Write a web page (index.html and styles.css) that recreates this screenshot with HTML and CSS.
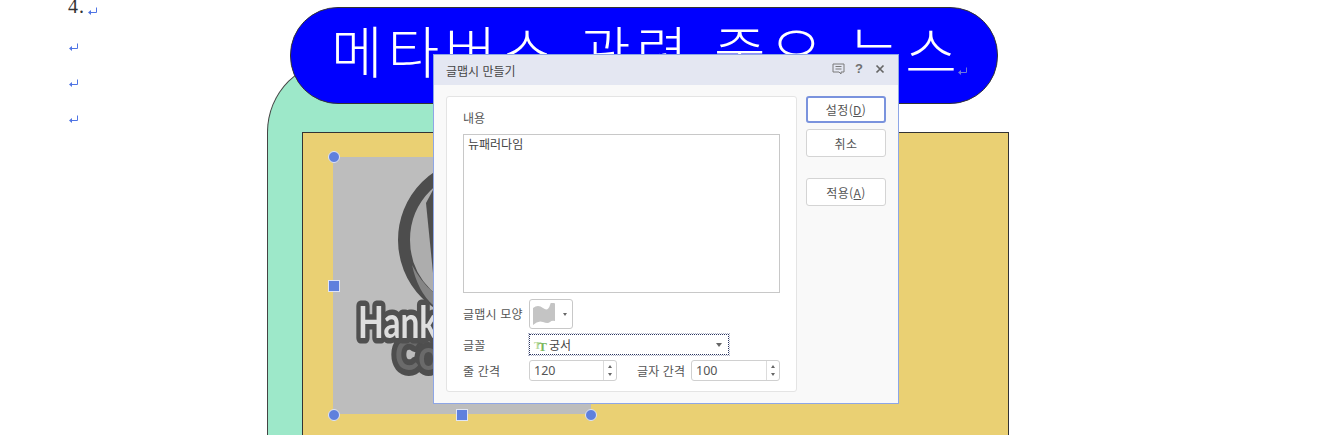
FILE: index.html
```html
<!DOCTYPE html>
<html lang="ko">
<head>
<meta charset="utf-8">
<title>글맵시 만들기</title>
<link rel="stylesheet" href="styles.css">
</head>
<body>
<svg width="0" height="0" class="defs"><symbol id="pm" viewBox="0 0 10 9"><path d="M8.5 .5V5.5H2" fill="none" stroke="currentColor"/><path d="M0 5.5L3 3V8Z" fill="currentColor"/></symbol></svg>
<main class="doc">
  <div class="para first"><span class="num">4.</span><svg class="mark"><use href="#pm"/></svg></div>
  <div class="para"><svg class="mark"><use href="#pm"/></svg></div>
  <div class="para"><svg class="mark"><use href="#pm"/></svg></div>
  <div class="para"><svg class="mark"><use href="#pm"/></svg></div>
</main>

<div class="green"></div>
<div class="yellow"></div>
<div class="picture">
  <svg class="logo" width="258" height="257" viewBox="0 0 258 257">
    <circle cx="147" cy="83" r="76" fill="#adadad" stroke="#4d4d4d" stroke-width="12"/>
    <path d="M79 108Q85 135 100 148V135Q88 125 79 108Z" fill="#858585"/>
    <path d="M93 46L100 116V33Z" fill="#4d4d4d"/>
    <text transform="translate(62 213) scale(.85 1)" class="co">Co</text>
    <text transform="translate(25 181) scale(.78 1)" class="hank">Hank</text>
  </svg>
</div>
<span class="handle round h-tl"></span>
<span class="handle square h-ml"></span>
<span class="handle round h-bl"></span>
<span class="handle square h-bm"></span>
<span class="handle round h-br"></span>

<div class="banner">
  <span class="banner-text">메타버스 관련 중요 뉴스</span><svg class="mark pale"><use href="#pm"/></svg>
</div>

<section class="dialog">
  <header class="titlebar">
    <h1 class="title">글맵시 만들기</h1>
    <div class="title-tools">
      <svg class="tool" viewBox="0 0 13 12"><path d="M1 1H12V9H9V11L7 9H1Z M3.5 3.5H9.5 M3.5 6H9.5" fill="none" stroke="#7a7a7a"/></svg>
      <span class="help">?</span>
      <svg class="tool close" viewBox="0 0 10 10"><path d="M1.5 1.5L8.5 8.5M8.5 1.5L1.5 8.5" stroke="#666" stroke-width="1.7"/></svg>
    </div>
  </header>
  <div class="body">
    <div class="panel">
      <div class="label content-label">내용</div>
      <div class="textarea">뉴패러다임</div>
      <div class="row shape-row">
        <span class="label row-label">글맵시 모양</span>
        <div class="picker">
          <svg width="25" height="23" viewBox="0 0 25 23"><path d="M1 5Q6 1 11 5T18 2T23 1V18Q20 17 18 19T11 19T1 22Z" fill="#c4c4c4"/></svg>
          <i class="caret small"></i>
        </div>
      </div>
      <div class="row font-row">
        <span class="label row-label">글꼴</span>
        <div class="select">
          <span class="tt">T<b>T</b></span><span class="font-name">궁서</span><i class="caret"></i>
        </div>
      </div>
      <div class="row spin-row">
        <span class="label row-label">줄 간격</span>
        <div class="spin"><span class="value">120</span><span class="arrows"><i class="up"></i><i class="down"></i></span></div>
        <span class="label gap-label">글자 간격</span>
        <div class="spin"><span class="value">100</span><span class="arrows"><i class="up"></i><i class="down"></i></span></div>
      </div>
    </div>
    <div class="actions">
      <button class="btn primary">설정(<u>D</u>)</button>
      <button class="btn">취소</button>
      <button class="btn apply">적용(<u>A</u>)</button>
    </div>
  </div>
</section>
</body>
</html>
```
FILE: styles.css
```css
* { box-sizing: border-box; }
html, body { margin: 0; height: 435px; overflow: hidden; background: #fff; }
body { position: relative; width: 1340px; font-family: "Noto Sans CJK KR", "Noto Sans", sans-serif; }
.defs { position: absolute; }

.doc { padding: 0 0 0 68px; margin-top: -14px; }
.para { height: 36px; display: flex; align-items: center; padding-left: 1px; }
.para.first { height: 43px; align-items: flex-end; padding: 0 0 11px; }
.num { font: 20px/24px "Liberation Serif", serif; color: #333; letter-spacing: .9px; margin-right: 3px; }
.mark { width: 10px; height: 9px; color: #4f74e4; flex: none; }
.first .mark { margin-bottom: 2px; }

.green { position: absolute; left: 267px; top: 60px; width: 600px; height: 375px; background: #9de8c9; border: 1px solid #444; border-bottom: 0; border-radius: 72px 72px 0 0; }
.yellow { position: absolute; left: 302px; top: 132px; width: 707px; height: 303px; background: #ead073; border: 1px solid #333; border-bottom: 0; }
.picture { position: absolute; left: 333px; top: 157px; width: 258px; height: 257px; background: #bdbdbd; overflow: hidden; }
.logo { display: block; filter: blur(.4px); }
.hank { font: 700 43px "Lato", sans-serif; fill: #dedede; stroke: #505050; stroke-width: 10px; paint-order: stroke; stroke-linejoin: round; vector-effect: non-scaling-stroke; }
.co { font: 700 42px "Lato", sans-serif; fill: #6a6a6a; stroke: #4e4e4e; stroke-width: 11px; paint-order: stroke; stroke-linejoin: round; vector-effect: non-scaling-stroke; }

.handle { position: absolute; width: 12px; height: 12px; background: #5f80dd; border: 1.5px solid #dfe5f5; }
.handle.round { border-radius: 50%; }
.h-tl { left: 328px; top: 151px; }
.h-ml { left: 328px; top: 280px; }
.h-bl { left: 328px; top: 409px; }
.h-bm { left: 456px; top: 409px; }
.h-br { left: 585px; top: 409px; }

.banner { position: absolute; left: 290px; top: 7px; width: 708px; height: 97px; background: #0000ff; border: 1px solid #333; border-radius: 48px; display: flex; align-items: flex-end; padding: 0 0 27px 40px; color: #fff; }
.banner-text { font-size: 56px; font-weight: 300; line-height: 70px; letter-spacing: 5.3px; white-space: pre; margin-bottom: -8px; }
.mark.pale { color: #6f7ad8; margin-left: -4px; }

.dialog { position: absolute; left: 433px; top: 54px; width: 466px; height: 350px; background: #f9f9f9; border: 1px solid #8ea6e6; font-size: 12px; color: #444; display: flex; flex-direction: column; }
.titlebar { height: 30px; background: #e4e7f2; display: flex; align-items: center; justify-content: space-between; padding: 0 13px 0 12px; flex: none; }
.title { margin: 0; font-size: 12px; font-weight: 400; color: #444; }
.title-tools { display: flex; align-items: center; gap: 10px; margin-bottom: 2px; }
.tool { width: 13px; height: 12px; display: block; }
.tool.close { width: 10px; height: 10px; margin-left: 2px; }
.help { font: 700 13px/14px "Liberation Sans", sans-serif; color: #707070; }

.body { flex: 1; display: flex; padding: 11px 12px 12px; gap: 9px; min-height: 0; }
.panel { width: 351px; height: 296px; background: #fff; border: 1px solid #e4e4e4; border-radius: 3px; padding: 12px 16px 0; }
.label { line-height: 18px; white-space: nowrap; color: #555; }
.content-label { margin-bottom: 7px; }
.textarea { width: 317px; height: 159px; border: 1px solid #c8c8c8; padding: 0 4px; line-height: 17px; color: #444; }
.row { display: flex; align-items: center; }
.row-label { width: 66px; flex: none; letter-spacing: .2px; }
.shape-row { margin-top: 6px; }
.picker { width: 44px; height: 30px; border: 1px solid #c8c8c8; border-radius: 3px; display: flex; align-items: center; padding-left: 2px; gap: 6px; }
.caret { display: block; width: 0; height: 0; border: 3px solid transparent; border-top: 4px solid #666; border-bottom: 0; }
.caret.small { border-width: 2px; border-top-width: 3px; border-bottom-width: 0; }
.font-row { margin-top: 5px; }
.select { width: 200px; height: 21px; border: 1px dotted #2a3560; outline: 1px dotted #b0b4c8; display: flex; align-items: center; padding: 0 6px 0 4px; background: #fff; }
.tt { font: 700 11px/12px "Liberation Serif", serif; color: #b5d9a0; letter-spacing: -3px; width: 15px; display: flex; }
.tt b { font-size: 13px; color: #7cb85c; transform: translate(0, 2px); }
.font-name { flex: 1; color: #444; }
.spin-row { margin-top: 5px; }
.spin { width: 88px; height: 21px; border: 1px solid #d0d0d0; border-radius: 3px; display: flex; align-items: stretch; }
.spin-row .spin:last-child { width: 89px; }
.value { flex: 1; padding-left: 4px; font-family: "Noto Sans", sans-serif; font-size: 12.5px; line-height: 19px; color: #555; }
.arrows { width: 13px; border-left: 1px solid #dcdcdc; display: flex; flex-direction: column; align-items: center; justify-content: center; gap: 5px; }
.arrows i { width: 0; height: 0; border: 2.5px solid transparent; }
.arrows .up { border-top: 0; border-bottom: 3px solid #666; }
.arrows .down { border-bottom: 0; border-top: 3px solid #666; }
.gap-label { margin: 0 5px 0 20px; width: 49px; letter-spacing: .1px; }

.actions { display: flex; flex-direction: column; gap: 6px; }
.btn { width: 80px; height: 28px; padding: 0; background: #fff; border: 1px solid #d4d4d4; border-radius: 3px; font: 12px "Noto Sans CJK KR", sans-serif; color: #555; letter-spacing: .4px; }
.btn.primary { height: 27px; border: 2px solid #7a93dd; }
.btn.apply { margin-top: 15px; }
```
